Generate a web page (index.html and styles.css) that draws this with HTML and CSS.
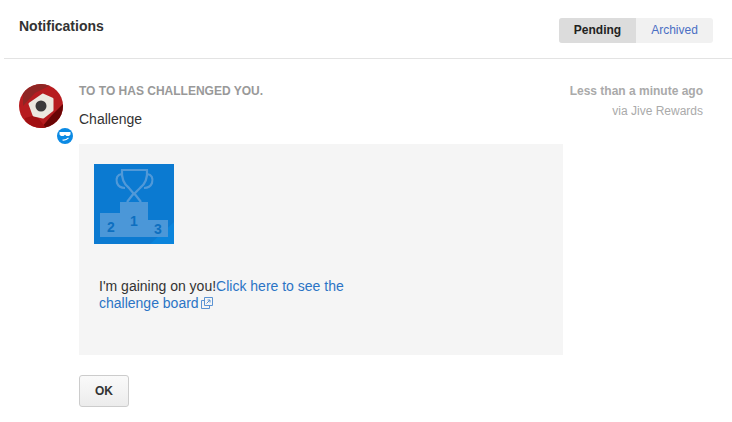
FILE: index.html
```html
<!DOCTYPE html>
<html lang="en">
<head>
  <meta charset="UTF-8">
  <title>Notifications</title>
  <link rel="stylesheet" href="styles.css">
</head>
<body>
  <div class="app">
    <header class="top">
      <h1>Notifications</h1>
      <div class="tabs">
        <span class="tab active">Pending</span>
        <span class="tab">Archived</span>
      </div>
    </header>
    <main class="note">
      <div class="avatar-col">
        <svg class="avatar" width="44" height="44" viewBox="0 0 44 44">
          <defs><clipPath id="round"><circle cx="22" cy="22" r="22"/></clipPath></defs>
          <g clip-path="url(#round)">
            <rect width="44" height="44" fill="#b71c1f"/>
            <path d="M4 0H34L16 9L4 22Z" fill="#8f2624"/>
            <path d="M44 20V44H22L33 31Z" fill="#6a0505"/>
            <path d="M6 34L17 31L27 44H8Z" fill="#a11012"/>
            <path d="M24 11L33 15L33 26L24 33L15 31L11 20Z" fill="#ece8df" stroke="#ece8df" stroke-width="3" stroke-linejoin="round"/>
            <circle cx="22" cy="22" r="5.500" fill="#3c3a3a"/>
          </g>
        </svg>
        <svg class="badge" width="16" height="16" viewBox="0 0 16 16">
          <circle cx="8" cy="8" r="8" fill="#0b8ae4"/>
          <path d="M2.500 4H13.500V6.500L12 8H9.500L8 6.800L6.500 8H4L2.500 6.500Z" fill="#fff"/>
          <path d="M5.500 12Q9 12.500 11.500 9.800" fill="none" stroke="#fff" stroke-width="1.200"/>
        </svg>
      </div>
      <div class="body">
        <div class="title">TO TO HAS CHALLENGED YOU.</div>
        <div class="kind">Challenge</div>
        <div class="panel">
          <svg class="reward" width="80" height="80" viewBox="0 0 80 80">
            <rect width="80" height="80" fill="#0b7ad1"/>
            <path d="M56 80H80V58Z" fill="#0a84dc"/>
            <g fill="none" stroke="#5199d8" stroke-width="2.200">
              <path d="M28 6H53Q54 18 46 24L40 30L35 24Q27 18 28 6Z"/>
              <path d="M28 10Q21 11 23 19Q25 24 31 24"/>
              <path d="M53 10Q60 11 58 19Q56 24 50 24"/>
              <path d="M40 29L33 38M40 29L47 38"/>
            </g>
            <path d="M26 38H54V56H74V73H6V49H26Z" fill="#4b97d8"/>
            <text class="rank" x="40" y="62">1</text>
            <text class="rank" x="17" y="68">2</text>
            <text class="rank" x="64" y="70">3</text>
          </svg>
          <p class="message">I'm gaining on you!<a href="#">Click here to see the challenge board<svg class="ext" width="12" height="12" viewBox="0 0 12 12"><path d="M3.500 3.500H.5V11.500H8.500V8.500M3.500.5H11.500V8.500H3.500Z M5.500 6.500L9 3M6.500 3H9V5.500" fill="none" stroke="#5b93d3"/></svg></a></p>
        </div>
        <button class="ok">OK</button>
      </div>
      <div class="meta">
        <div class="when">Less than a minute ago</div>
        <div class="via">via Jive Rewards</div>
      </div>
    </main>
  </div>
</body>
</html>
```

FILE: styles.css
```css
body { margin: 0; background: #fff; color: #333; font-family: "Liberation Sans", Arial, sans-serif; font-size: 14px; }
.app { width: 732px; height: 422px; overflow: hidden; padding-left: 4px; box-sizing: border-box; }

.top { height: 59px; box-sizing: border-box; border-bottom: 1px solid #e3e3e3; display: flex; justify-content: space-between; align-items: flex-start; padding: 18px 19px 0 15px; }
.top h1 { margin: 0; font-size: 14px; line-height: 16px; font-weight: bold; color: #333; }
.tabs { display: flex; height: 25px; border-radius: 3px; overflow: hidden; background: #f1f1f1; font-size: 12px; line-height: 25px; }
.tab { width: 77px; text-align: center; color: #4a6fc4; }
.tab.active { background: #dcdcdc; color: #222; font-weight: bold; }

.note { display: flex; padding: 25px 29px 0 15px; }
.avatar-col { width: 60px; flex: none; display: flex; flex-direction: column; }
.avatar { display: block; }
.badge { display: block; margin: 0 0 0 38px; }

.body { width: 484px; flex: none; }
.title { font-size: 12px; line-height: 14px; font-weight: bold; color: #999; }
.kind { font-size: 14px; line-height: 16px; margin-top: 13px; color: #333; }
.panel { margin-top: 17px; height: 211px; box-sizing: border-box; background: #f5f5f5; padding: 20px 15px 0; }
.reward { display: block; }
.rank { font-family: "Liberation Sans", Arial, sans-serif; font-size: 14px; font-weight: bold; fill: #0d6fc0; text-anchor: middle; }
.message { margin: 34px 0 0 5px; width: 270px; font-size: 14px; line-height: 17px; color: #333; }
.message a { color: #2b74c5; text-decoration: none; }
.ext { margin-left: 2px; vertical-align: -1px; }
.ok { display: block; margin-top: 20px; width: 50px; height: 32px; padding: 0; border: 1px solid #ccc; border-radius: 3px; background: linear-gradient(#fafafa, #ececec); font-family: inherit; font-size: 12px; font-weight: bold; color: #333; }

.meta { flex: 1; text-align: right; font-size: 12px; white-space: nowrap; }
.when { line-height: 14px; font-weight: bold; color: #aaa; }
.via { line-height: 14px; margin-top: 6px; color: #aaa; }
```
